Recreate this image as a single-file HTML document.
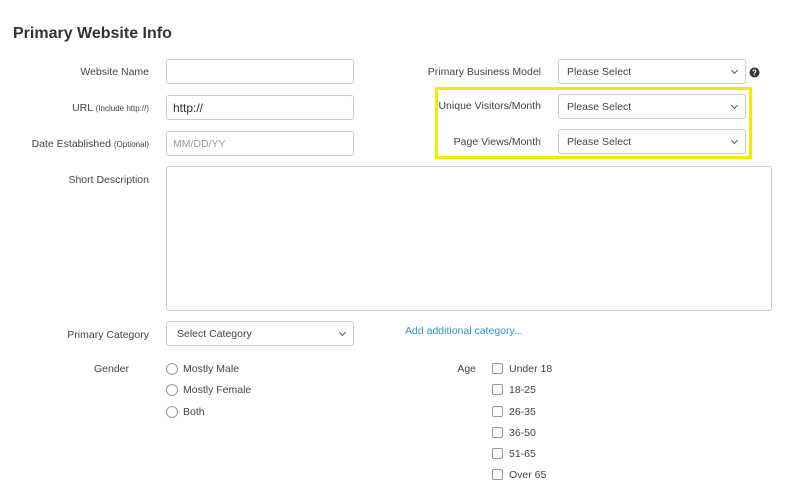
<!DOCTYPE html>
<html><head><style>
body{margin:0;width:796px;height:497px;background:#fff;font-family:"Liberation Sans",Arial,sans-serif;color:#333;position:relative;overflow:hidden}
.a{position:absolute}
h1{position:absolute;left:13px;top:25px;margin:0;font-size:16px;font-weight:bold;color:#333}
.l{position:absolute;font-size:10.5px;color:#444;text-align:right;line-height:14px}
.l small{font-size:8px}
.in{position:absolute;border:1px solid #ccc;border-radius:3px;background:#fff;box-sizing:border-box;font-size:10.5px;line-height:24px;padding-left:8px;color:#444}
.sel:after{content:"";position:absolute;right:8px;top:8px;width:4px;height:4px;border-right:1.2px solid #555;border-bottom:1.2px solid #555;transform:rotate(45deg)}
.rad{position:absolute;width:10px;height:10px;border:1px solid #999;border-radius:50%}
.cb{position:absolute;width:9px;height:9px;border:1px solid #999;border-radius:2px}
.t{position:absolute;font-size:10.5px;color:#444;line-height:14px}
</style></head><body>
<h1>Primary Website Info</h1>
<div class="l" style="right:647px;top:65px">Website Name</div>
<div class="l" style="right:647px;top:101px">URL <small>(Include http://)</small></div>
<div class="l" style="right:647px;top:137px">Date Established <small>(Optional)</small></div>
<div class="l" style="right:647px;top:173px">Short Description</div>
<div class="in" style="left:166px;top:59px;width:188px;height:25px"></div>
<div class="in" style="left:166px;top:95px;width:188px;height:25px;font-size:12px;color:#333;padding-left:6px">http://</div>
<div class="in" style="left:166px;top:131px;width:188px;height:25px;color:#999;padding-left:6px">MM/DD/YY</div>
<div class="in" style="left:166px;top:166px;width:606px;height:145px"></div>
<div class="l" style="right:255px;top:65px">Primary Business Model</div>
<div class="in sel" style="left:558px;top:59px;width:188px;height:25px">Please Select</div>
<svg class="a" style="left:749px;top:67px" width="11" height="11"><circle cx="5.5" cy="5.5" r="5" fill="#333"/><text x="5.5" y="8.5" font-size="8" font-weight="bold" fill="#fff" text-anchor="middle" font-family="Liberation Sans">?</text></svg>
<div class="a" style="left:435px;top:87px;width:311px;height:66px;border:3px solid #f3ea00"></div>
<div class="l" style="right:255px;top:99px">Unique Visitors/Month</div>
<div class="in sel" style="left:558px;top:94px;width:188px;height:25px">Please Select</div>
<div class="l" style="right:255px;top:135px">Page Views/Month</div>
<div class="in sel" style="left:558px;top:129px;width:188px;height:25px">Please Select</div>
<div class="l" style="right:647px;top:328px">Primary Category</div>
<div class="in sel" style="left:166px;top:321px;width:188px;height:25px;padding-left:10px">Select Category</div>
<div class="t" style="left:405px;top:324px;color:#2e8fd0">Add additional category...</div>
<div class="l" style="right:667px;top:362px">Gender</div>
<div class="rad" style="left:166px;top:363px"></div><div class="t" style="left:183px;top:362px">Mostly Male</div>
<div class="rad" style="left:166px;top:384px"></div><div class="t" style="left:183px;top:383px">Mostly Female</div>
<div class="rad" style="left:166px;top:406px"></div><div class="t" style="left:183px;top:405px">Both</div>
<div class="l" style="right:320px;top:362px">Age</div>
<div class="cb" style="left:492px;top:363px"></div><div class="t" style="left:509px;top:362px">Under 18</div>
<div class="cb" style="left:492px;top:384px"></div><div class="t" style="left:509px;top:383px">18-25</div>
<div class="cb" style="left:492px;top:406px"></div><div class="t" style="left:509px;top:405px">26-35</div>
<div class="cb" style="left:492px;top:427px"></div><div class="t" style="left:509px;top:426px">36-50</div>
<div class="cb" style="left:492px;top:448px"></div><div class="t" style="left:509px;top:447px">51-65</div>
<div class="cb" style="left:492px;top:469px"></div><div class="t" style="left:509px;top:468px">Over 65</div>
</body></html>
